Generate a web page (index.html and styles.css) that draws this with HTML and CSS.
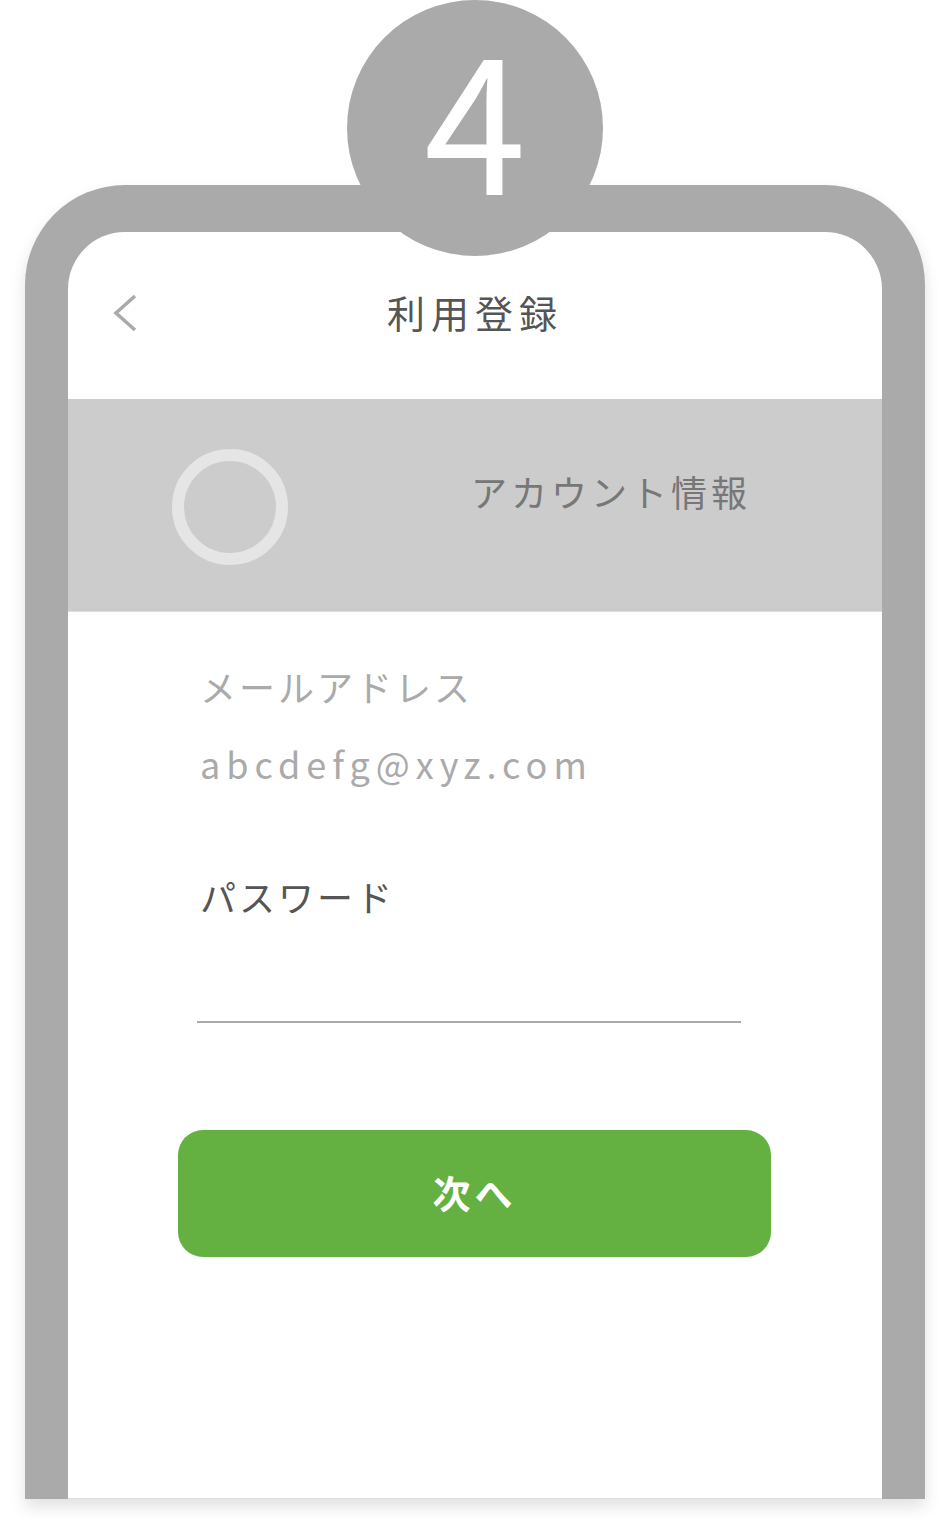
FILE: index.html
```html
<!DOCTYPE html>
<html lang="ja">
<head>
  <meta charset="UTF-8">
  <title>利用登録</title>
  <link rel="stylesheet" href="styles.css">
</head>
<body>
  <div class="stage">
    <div class="step-badge"><span class="step-num">4</span></div>
    <div class="phone">
      <div class="screen">
        <div class="top-bar">
          <div class="back">
            <svg width="26" height="40" viewBox="0 0 26 40">
              <polyline points="22,2 3,19 22,36" fill="none" stroke="#aaa" stroke-width="3.5"/>
            </svg>
          </div>
          <h1 class="title">利用登録</h1>
          <div></div>
        </div>

        <div class="step-band">
          <div class="step-ring"></div>
          <p class="step-name">アカウント情報</p>
        </div>

        <div class="form">
          <p class="label light">メールアドレス</p>
          <p class="email">abcdefg@xyz.com</p>
          <p class="label dark">パスワード</p>
          <div class="pass-input"></div>
          <button class="next-btn">次へ</button>
        </div>
      </div>
    </div>
  </div>
</body>
</html>
```

FILE: styles.css
```css
body {
  margin: 0;
  padding: 0;
  background: #fff;
  font-family: "Noto Sans CJK JP", "Noto Sans", sans-serif;
  overflow: hidden;
}

.stage {
  position: relative;
  width: 952px;
  height: 1534px;
  padding-top: 185px;
  box-sizing: border-box;
}

.step-badge {
  position: absolute;
  top: 0;
  left: 347px;
  width: 256px;
  height: 256px;
  border-radius: 50%;
  background: #aaa;
  display: flex;
  justify-content: center;
  align-items: center;
  z-index: 2;
}

.step-num {
  display: block;
  color: #fff;
  font-size: 184px;
  line-height: 150px;
  margin-bottom: 26px;
}

.phone {
  margin-left: 25px;
  width: 900px;
  height: 1314px;
  box-sizing: border-box;
  padding: 47px 43px 0;
  background: #aaa;
  border-radius: 100px 100px 0 0;
  box-shadow: 0 8px 16px rgba(0, 0, 0, 0.12);
}

.screen {
  height: 100%;
  background: #fff;
  border-radius: 57px 57px 0 0;
  overflow: hidden;
  border-bottom: 1px solid #ddd;
  box-sizing: border-box;
}

.top-bar {
  height: 167px;
  box-sizing: border-box;
  padding-bottom: 8px;
  display: grid;
  grid-template-columns: 1fr auto 1fr;
  align-items: center;
}

.back {
  padding-left: 45px;
  padding-top: 4px;
}

.back svg {
  display: block;
}

.title {
  margin: 0;
  font-size: 38px;
  font-weight: 400;
  letter-spacing: 6px;
  color: #555;
  line-height: 1;
}

.step-band {
  height: 212px;
  background: #ccc;
  border-bottom: 1px solid #ddd;
  display: flex;
  align-items: center;
  padding-left: 104px;
}

.step-ring {
  width: 92px;
  height: 92px;
  border: 12px solid #e5e5e5;
  border-radius: 50%;
  margin-top: 4px;
}

.step-name {
  margin: 0 0 28px 183px;
  font-size: 36px;
  letter-spacing: 4px;
  color: #777;
  line-height: 50px;
}

.form {
  padding: 49px 0 0 132px;
}

.form p {
  margin: 0;
  font-size: 36px;
  line-height: 50px;
}

.label {
  letter-spacing: 3px;
}

.light {
  color: #aaa;
}

.dark {
  color: #555;
  margin-top: 83px !important;
}

.email {
  margin-top: 27px !important;
  color: #aaa;
  letter-spacing: 6px;
}

.pass-input {
  width: 544px;
  height: 100px;
  border-bottom: 2px solid #aaa;
  margin-left: -3px;
}

.next-btn {
  display: block;
  margin: 107px 0 0 -22px;
  padding-bottom: 6px;
  width: 593px;
  height: 127px;
  border: none;
  border-radius: 25px;
  background: #64b141;
  color: #fff;
  font-family: "Noto Sans CJK JP", sans-serif;
  font-size: 38px;
  font-weight: bold;
  letter-spacing: 4px;
}
```
